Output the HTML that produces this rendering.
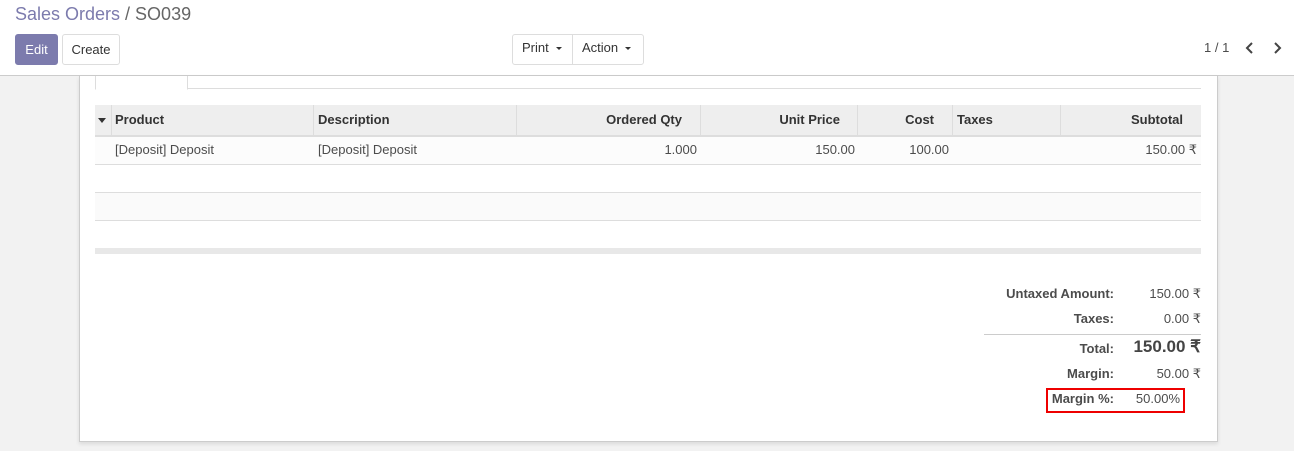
<!DOCTYPE html>
<html><head><style>
*{box-sizing:border-box;margin:0;padding:0}
body{width:1294px;height:451px;overflow:hidden;font-family:"Liberation Sans",sans-serif;font-size:13px;color:#4c4c4c;background:#f2f2f2;position:relative}
.top{position:absolute;left:0;top:0;width:1294px;height:76px;background:#fff;border-bottom:1px solid #ccc}
.bc{position:absolute;left:15px;top:4px;font-size:18px;color:#7c7bad}
.bc span{color:#666}
.btn{position:absolute;height:31px;border:1px solid #ddd;border-radius:3px;background:#fff;color:#333;font-size:13px;line-height:29px;text-align:center}
.sheet{position:absolute;left:79px;top:76px;width:1139px;height:366px;background:#fff;border:1px solid #ccc;border-top:none;box-shadow:0 2px 4px rgba(0,0,0,.1)}
.car{display:inline-block;border-left:3px solid transparent;border-right:3px solid transparent;border-top:3px solid #333;vertical-align:middle;margin-left:7px}
.th{position:absolute;top:105px;height:32px;line-height:30px;font-weight:bold;color:#333;border-right:1px solid #ddd}
.td{position:absolute;top:136px;height:28px;line-height:28px;color:#4c4c4c}
.r{text-align:right}
.lbl{position:absolute;right:180px;width:150px;text-align:right;font-weight:bold;color:#4c4c4c}
.val{position:absolute;right:93px;text-align:right}
</style></head><body>
<div class="top">
<div class="bc">Sales Orders <span>/ SO039</span></div>
<div class="btn" style="left:15px;top:34px;width:43px;background:#7c7bad;border-color:#7c7bad;color:#fff">Edit</div>
<div class="btn" style="left:62px;top:34px;width:58px">Create</div>
<div class="btn" style="left:512px;top:34px;width:132px;"></div>
<div style="position:absolute;left:572px;top:35px;width:1px;height:29px;background:#ddd"></div>
<div style="position:absolute;left:522px;top:40px;color:#333">Print<span class="car"></span></div>
<div style="position:absolute;left:582px;top:40px;color:#333">Action<span class="car"></span></div>
<div style="position:absolute;left:1204px;top:40px;color:#4c4c4c">1 / 1</div>
<svg style="position:absolute;left:1244px;top:42px" width="12" height="12"><path d="M8 1L3 6l5 5" stroke="#444" stroke-width="2" fill="none"/></svg>
<svg style="position:absolute;left:1271px;top:42px" width="12" height="12"><path d="M4 1l5 5-5 5" stroke="#444" stroke-width="2" fill="none"/></svg>
</div>
<div class="sheet"></div>
<div style="position:absolute;left:95px;top:76px;width:1106px;height:13px;border-bottom:1px solid #ddd"></div>
<div style="position:absolute;left:95px;top:76px;width:93px;height:14px;border:1px solid #ddd;border-top:none;border-bottom:1px solid #fff;background:#fff"></div>
<div style="position:absolute;left:95px;top:105px;width:1106px;height:32px;background:#eee;border-bottom:2px solid #ddd"></div>
<div class="th" style="left:95px;width:17px;padding-left:3px"><span class="car" style="margin:0;border-width:5px 4px 0 4px"></span></div>
<div class="th" style="left:112px;width:202px;padding-left:3px">Product</div>
<div class="th" style="left:314px;width:203px;padding-left:4px">Description</div>
<div class="th r" style="left:517px;width:184px;padding-right:18px">Ordered Qty</div>
<div class="th r" style="left:701px;width:157px;padding-right:17px">Unit Price</div>
<div class="th r" style="left:858px;width:95px;padding-right:18px">Cost</div>
<div class="th" style="left:953px;width:108px;padding-left:4px">Taxes</div>
<div class="th r" style="left:1061px;width:140px;padding-right:18px;border-right:none">Subtotal</div>
<div style="position:absolute;left:95px;top:137px;width:1106px;height:28px;background:#fcfcfc;border-bottom:1px solid #ddd"></div>
<div style="position:absolute;left:95px;top:165px;width:1106px;height:28px;border-bottom:1px solid #ddd"></div>
<div style="position:absolute;left:95px;top:193px;width:1106px;height:28px;background:#fafafa;border-bottom:1px solid #ddd"></div>
<div style="position:absolute;left:95px;top:221px;width:1106px;height:28px;border-bottom:1px solid #ddd"></div>
<div style="position:absolute;left:95px;top:248px;width:1106px;height:6px;background:#e8e8e8"></div>
<div class="td" style="left:115px">[Deposit] Deposit</div>
<div class="td" style="left:318px">[Deposit] Deposit</div>
<div class="td r" style="left:517px;width:180px">1.000</div>
<div class="td r" style="left:701px;width:154px">150.00</div>
<div class="td r" style="left:858px;width:91px">100.00</div>
<div class="td r" style="left:1061px;width:136px">150.00 ₹</div>
<div style="position:absolute;left:0;top:285px;width:1294px">
<div class="lbl" style="top:1px">Untaxed Amount:</div><div class="val" style="top:1px">150.00 ₹</div>
<div class="lbl" style="top:26px">Taxes:</div><div class="val" style="top:26px">0.00 ₹</div>
<div style="position:absolute;left:984px;top:49px;width:217px;height:1px;background:#ccc"></div>
<div class="lbl" style="top:56px">Total:</div><div class="val" style="top:52px;font-size:17px;font-weight:bold;color:#444">150.00 ₹</div>
<div class="lbl" style="top:81px">Margin:</div><div class="val" style="top:81px">50.00 ₹</div>
<div style="position:absolute;left:1046px;top:103px;width:139px;height:25px;border:2px solid #e00"></div>
<div class="lbl" style="top:106px">Margin %:</div><div class="val" style="top:106px;right:114px">50.00%</div>
</div>
</body></html>
